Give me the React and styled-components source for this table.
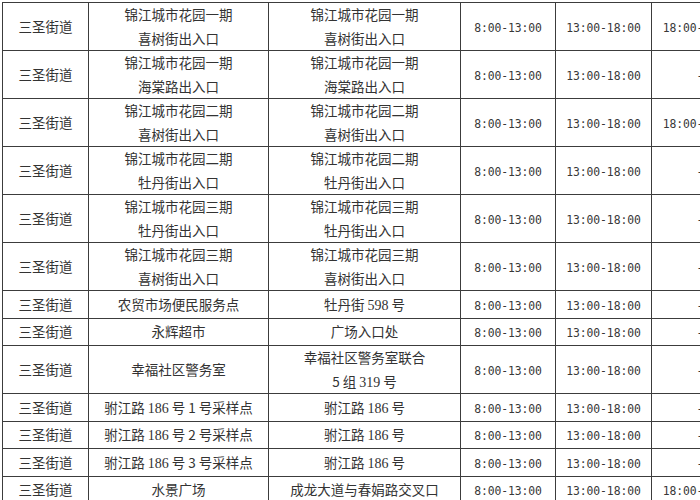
import React from 'react';
import styled, { createGlobalStyle } from 'styled-components';

const GlobalStyle = createGlobalStyle`
  html, body {
    margin: 0;
    padding: 0;
    background: #ffffff;
    overflow: hidden;
  }
`;

const Page = styled.div`
  padding: 2px 0 0 2px;
  width: 760px;
`;

const Table = styled.table`
  border-collapse: collapse;
  table-layout: fixed;
  width: 746px;
  font-family: "Noto Sans CJK SC", "Noto Sans", sans-serif;
  font-size: 13.5px;
  color: #333333;
`;

const Col = styled.col`
  width: ${({ $w }) => $w}px;
`;

const Cell = styled.td`
  border: 1px solid #3c3c3c;
  text-align: center;
  vertical-align: middle;
  line-height: 23.5px;
  height: ${({ $single }) => ($single ? '26.5px' : '47px')};
  padding: 0;
  white-space: nowrap;
  overflow: hidden;
`;

const Time = styled.span`
  font-family: "DejaVu Sans Mono", "Liberation Mono", monospace;
  font-size: 11.4px;
  letter-spacing: -0.1px;
  line-height: 1;
  color: #383838;
`;

const Num = styled.span`
  font-family: "Liberation Serif", serif;
  font-size: 14px;
  line-height: 1;
`;

const Line = styled.div`
  line-height: 23.5px;
`;

const rows = [
  { name: ['锦江城市花园一期', '喜树街出入口'], addr: ['锦江城市花园一期', '喜树街出入口'], night: '18:00-22:00' },
  { name: ['锦江城市花园一期', '海棠路出入口'], addr: ['锦江城市花园一期', '海棠路出入口'], night: '-' },
  { name: ['锦江城市花园二期', '喜树街出入口'], addr: ['锦江城市花园二期', '喜树街出入口'], night: '18:00-22:00' },
  { name: ['锦江城市花园二期', '牡丹街出入口'], addr: ['锦江城市花园二期', '牡丹街出入口'], night: '-' },
  { name: ['锦江城市花园三期', '牡丹街出入口'], addr: ['锦江城市花园三期', '牡丹街出入口'], night: '-' },
  { name: ['锦江城市花园三期', '喜树街出入口'], addr: ['锦江城市花园三期', '喜树街出入口'], night: '-' },
  { name: ['农贸市场便民服务点'], addr: [['牡丹街', '598', '号']], night: '-', single: true },
  { name: ['永辉超市'], addr: ['广场入口处'], night: '-', single: true },
  { name: ['幸福社区警务室'], addr: ['幸福社区警务室联合', ['5 组', '319', '号']], night: '-' },
  { name: [['驸江路', '186', '号 1 号采样点']], addr: [['驸江路', '186', '号']], night: '-', single: true },
  { name: [['驸江路', '186', '号 2 号采样点']], addr: [['驸江路', '186', '号']], night: '-', single: true },
  { name: [['驸江路', '186', '号 3 号采样点']], addr: [['驸江路', '186', '号']], night: '-', single: true },
  { name: ['水景广场'], addr: ['成龙大道与春娟路交叉口'], night: '18:00-22:00', single: true },
];

const Text = ({ value }) => {
  if (Array.isArray(value)) {
    const [pre, num, post] = value;
    return (
      <Line>
        {pre} <Num>{num}</Num> {post}
      </Line>
    );
  }
  return <Line>{value}</Line>;
};

const App = () => (
  <>
    <GlobalStyle />
    <Page>
      <Table>
        <colgroup>
          <Col $w={86} />
          <Col $w={180} />
          <Col $w={192} />
          <Col $w={95} />
          <Col $w={96} />
          <Col $w={97} />
        </colgroup>
        <tbody>
          {rows.map((r, i) => (
            <tr key={i}>
              <Cell $single={r.single}>三圣街道</Cell>
              <Cell $single={r.single}>
                {r.name.map((t, j) => <Text key={j} value={t} />)}
              </Cell>
              <Cell $single={r.single}>
                {r.addr.map((t, j) => <Text key={j} value={t} />)}
              </Cell>
              <Cell $single={r.single}><Time>8:00-13:00</Time></Cell>
              <Cell $single={r.single}><Time>13:00-18:00</Time></Cell>
              <Cell $single={r.single}><Time>{r.night}</Time></Cell>
            </tr>
          ))}
        </tbody>
      </Table>
    </Page>
  </>
);

export default App;
